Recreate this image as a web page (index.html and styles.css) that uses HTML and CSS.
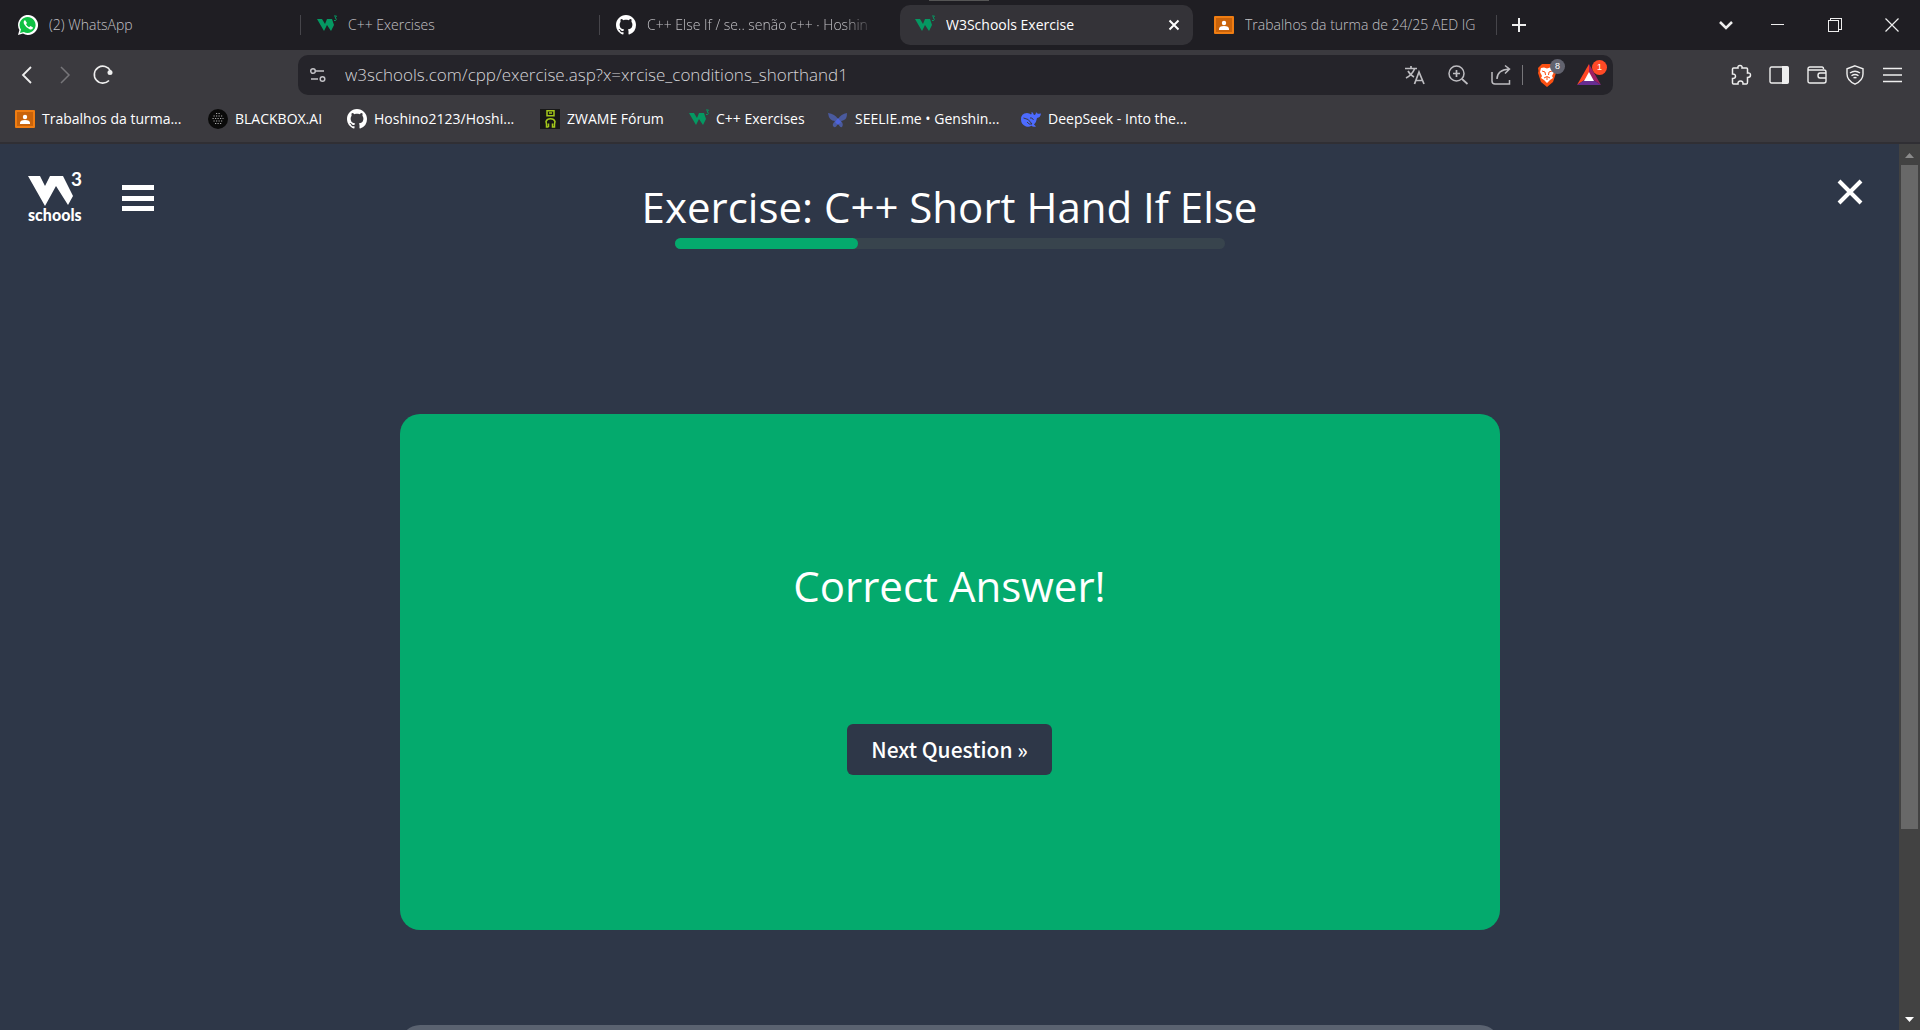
FILE: index.html
```html
<!DOCTYPE html>
<html lang="en">
<head>
<meta charset="utf-8">
<title>W3Schools Exercise</title>
<link rel="stylesheet" href="styles.css">
</head>
<body>
<svg class="sprite" aria-hidden="true">
  <symbol id="w3" viewBox="0 0 20 20">
    <path d="M0 4h5l3 5 2-5h5l2 6-3 6-4-6-3 6z" fill="#059862"/>
    <path d="M17 1h2.500L18 3q1.500 0 1.300 1.500T17 5.500" fill="none" stroke="#059862"/>
  </symbol>
  <symbol id="classroom" viewBox="0 0 20 20">
    <rect y="1" width="20" height="18" rx="1" fill="#ef7d12"/>
    <rect x="2" y="3" width="16" height="14" fill="#c9630a"/>
    <circle cx="10" cy="8" r="2.200" fill="#fff"/>
    <path d="M5 15v-1q0-3 5-3t5 3v1z" fill="#fff"/>
  </symbol>
  <symbol id="github" viewBox="0 0 16 16">
    <path fill="#fff" d="M8 0C3.580 0 0 3.580 0 8c0 3.540 2.290 6.530 5.470 7.590.4.070.55-.17.55-.38 0-.19-.01-.82-.01-1.490-2.010.37-2.530-.49-2.690-.94-.09-.23-.48-.94-.82-1.130-.28-.15-.68-.52-.01-.53.63-.01 1.080.58 1.230.82.72 1.210 1.870.87 2.330.66.07-.52.28-.87.51-1.070-1.780-.2-3.640-.89-3.640-3.950 0-.87.31-1.590.82-2.150-.08-.2-.36-1.020.08-2.120 0 0 .67-.21 2.200.82.64-.18 1.320-.27 2-.27s1.360.09 2 .27c1.530-1.040 2.200-.82 2.200-.82.44 1.100.16 1.920.08 2.120.51.56.82 1.270.82 2.150 0 3.070-1.870 3.750-3.650 3.950.29.25.54.73.54 1.480 0 1.070-.01 1.930-.01 2.200 0 .21.15.46.55.38A8.010 8.010 0 0 0 16 8c0-4.420-3.580-8-8-8z"/>
  </symbol>
</svg>

<header class="browser">
  <div class="tabstrip">
    <nav class="tabs" aria-label="Tabs">
      <a class="tab" href="#"><svg class="fav" viewBox="0 0 20 20"><path d="M0 20l1.400-5A10 10 0 1 1 5 18.600z" fill="#fff"/><path d="M2 18l1-3.500A8 8 0 1 1 5.800 17z" fill="#0fc144"/><path d="M7 5q-2 1-1 4 2 4 6 5.500 3 .5 3-2l-2.500-1.500-1.500 1.300q-2-1-3-3L9 8z" fill="#fff"/></svg><span class="tab-text">(2) WhatsApp</span></a>
      <a class="tab" href="#"><svg class="fav"><use href="#w3"/></svg><span class="tab-text">C++ Exercises</span></a>
      <a class="tab" href="#"><svg class="fav"><use href="#github"/></svg><span class="tab-text faded">C++ Else If / se.. senão c++ · Hoshin</span></a>
      <a class="tab active" href="#"><svg class="fav"><use href="#w3"/></svg><span class="tab-text">W3Schools Exercise</span><svg class="tab-close" viewBox="0 0 12 12"><path d="M1.500 1.500l9 9m0-9l-9 9"/></svg></a>
      <a class="tab" href="#"><svg class="fav"><use href="#classroom"/></svg><span class="tab-text">Trabalhos da turma de 24/25 AED IG</span></a>
    </nav>
    <button class="icon-btn new-tab" aria-label="New tab"><svg width="14" height="14" viewBox="0 0 14 14"><path d="M7 0v14M0 7h14" stroke-width="2"/></svg></button>
    <div class="window-controls">
      <button class="icon-btn tab-search" aria-label="Search tabs"><svg width="14" height="8" viewBox="0 0 14 8"><path d="M1 1l6 6 6-6" stroke-width="2.500"/></svg></button>
      <button class="icon-btn" aria-label="Minimize"><svg width="14" height="14" viewBox="0 0 14 14" shape-rendering="crispEdges"><path d="M0 6.500h13"/></svg></button>
      <button class="icon-btn" aria-label="Restore"><svg width="14" height="14" viewBox="0 0 14 14" shape-rendering="crispEdges"><path d="M.5 2.500h10v11H.5zM2.500 2V.5h11v11H11"/></svg></button>
      <button class="icon-btn" aria-label="Close"><svg width="14" height="14" viewBox="0 0 14 14"><path d="M.5.5l13 13m0-13l-13 13" stroke-width="1.200"/></svg></button>
    </div>
  </div>

  <div class="toolbar">
    <div class="nav-buttons">
      <button class="icon-btn" aria-label="Back"><svg width="10" height="18" viewBox="0 0 10 18"><path d="M9 1L1 9l8 8" stroke-width="1.800"/></svg></button>
      <button class="icon-btn dim" aria-label="Forward"><svg width="10" height="18" viewBox="0 0 10 18"><path d="M1 1l8 8-8 8" stroke-width="1.500"/></svg></button>
      <button class="icon-btn" aria-label="Reload"><svg width="20" height="20" viewBox="0 0 20 20"><path d="M17.500 6A8.500 8.500 0 1 0 16 15.500" stroke-width="1.600"/><circle cx="17" cy="7.500" r="2.500" fill="#eee" stroke="none"/></svg></button>
    </div>
    <div class="omnibox">
      <svg class="site-info" width="16" height="16" viewBox="0 0 16 16"><circle cx="3" cy="4" r="2.300"/><path d="M6 4h8M1 12h7"/><circle cx="12.500" cy="12" r="2.300"/></svg>
      <input class="url" type="text" aria-label="Address" value="w3schools.com/cpp/exercise.asp?x=xrcise_conditions_shorthand1">
      <button class="icon-btn soft" aria-label="Translate"><svg width="20" height="20" viewBox="0 0 20 20"><path d="M0 3.500h12M6 1v2M9.500 4Q7 10 1 13M3 6q2 4 6 6M9.500 19l4.500-12 5 12M11 15.500h6.500" stroke-width="1.700"/></svg></button>
      <button class="icon-btn soft" aria-label="Zoom"><svg width="20" height="20" viewBox="0 0 20 20"><circle cx="8.500" cy="8.500" r="7.500" stroke-width="1.500"/><path d="M14 14l5.500 5M8.500 5v7M5 8.500h7" stroke-width="1.700"/></svg></button>
      <button class="icon-btn soft" aria-label="Share"><svg width="20" height="20" viewBox="0 0 20 20"><path d="M1 7v9q0 3 3 3h14.500v-4M6 14q0-9 12-10M14 .5L18.500 4 14 8.500" stroke-width="1.500"/></svg></button>
      <span class="divider"></span>
      <button class="icon-btn badged" aria-label="Brave Shields"><svg width="20" height="24" viewBox="0 0 20 24"><path d="M5 1h10l4 4-.5 3 .5 2-3 9-6 5-6-5-3-9 .5-2L1 5z" fill="#fb5012" stroke="none"/><path d="M4 5l3-.5 3 1 3-1L16 5l1 4-2 4 1 2-3 2-3 3-3-3-3-2 1-2-2-4z" fill="#fff" stroke="none"/><path d="M5 8l3 1 .5 3M15 8l-3 1-.5 3M7 15l3-1.500 3 1.500M10 14v3" stroke="#fb5012"/></svg><span class="badge">8</span></button>
      <button class="icon-btn badged" aria-label="Rewards"><svg width="24" height="22" viewBox="0 0 24 22"><path d="M12 0L0 21 9 15 12 9z" fill="#ff4724" stroke="none"/><path d="M12 0l12 21-9-6-3-6z" fill="#9e1f63" stroke="none"/><path d="M0 21h24l-9-6H9z" fill="#662d91" stroke="none"/><path d="M12 8l5 9H7z" fill="#fff" stroke="none"/></svg><span class="badge alert">1</span></button>
    </div>
    <div class="extensions">
      <button class="icon-btn" aria-label="Extensions"><svg width="20" height="20" viewBox="0 0 20 20"><path d="M1.500 4q0-1 1-1H7q-.5-2.500 2-2.500T11 3h4.500q1 0 1 1v4q3-.5 3 2t-3 2.500v4.500q0 2-1 2H12q.3-3-2.500-3T7 19H2.500q-1 0-1-1v-4.500q3 0 3-2.300T1.500 9z" stroke-width="1.500"/></svg></button>
      <button class="icon-btn" aria-label="Sidebar"><svg width="20" height="18" viewBox="0 0 20 18"><rect x="1" y="1" width="18" height="16" rx="1.500" stroke-width="1.400"/><path d="M13 0h5q2 0 2 2v14q0 2-2 2h-5z" fill="#eee" stroke="none"/></svg></button>
      <button class="icon-btn" aria-label="Wallet"><svg width="20" height="18" viewBox="0 0 20 18"><path d="M1 3q0-2 2-2h12q1.500 0 1.500 2M1 3q0 1 1.500 1H17q2 0 2 2v9q0 2-2 2H3q-2 0-2-2zM19 7h-6q-2 0-2 2.500t2 2.500h6z" stroke-width="1.400"/></svg></button>
      <button class="icon-btn" aria-label="VPN"><svg width="18" height="20" viewBox="0 0 18 20"><path d="M9 .8l8 3V9q0 6.500-8 10.200Q1 15.500 1 9V3.800z" stroke-width="1.400"/><path d="M4 8q5-3.500 10 0M5.500 10.700q3.500-2.500 7 0M7.500 13q1.500-1 3 0" stroke-width="1.400"/></svg></button>
      <button class="icon-btn" aria-label="Menu"><svg width="20" height="16" viewBox="0 0 20 16"><path d="M0 1.500h19M0 8h19M0 14.500h19" stroke-width="1.700"/></svg></button>
    </div>
  </div>

  <nav class="bookmarks" aria-label="Bookmarks">
    <a class="bookmark" href="#"><svg class="fav"><use href="#classroom"/></svg><span class="label-wide">Trabalhos da turma...</span></a>
    <a class="bookmark" href="#"><svg class="fav" viewBox="0 0 20 20"><circle cx="10" cy="10" r="10" fill="#0a0a0a"/><path d="M8 4.500h5M5.500 7h9M4.500 9.500h11M5.500 12h10M7 14.500h7" stroke="#aaa" stroke-width="1.200" stroke-dasharray="1.200 1.300"/></svg><span class="label-narrow">BLACKBOX.AI</span></a>
    <a class="bookmark" href="#"><svg class="fav"><use href="#github"/></svg><span class="label-wide">Hoshino2123/Hoshi...</span></a>
    <a class="bookmark" href="#"><svg class="fav" viewBox="0 0 20 20"><path d="M0 0h20v20H0z" fill="#171717"/><path d="M7 1.700h7v5H7zM9 4h3M8.500 18H6.500v-3L6 12.500Q7 9.700 10.500 9.700T15 12.500l-.5 2.500v3h-2v-3.500M8.500 18v-3.500" fill="none" stroke="#a4c81b" stroke-width="1.500"/></svg><span class="label-middle">ZWAME Fórum</span></a>
    <a class="bookmark" href="#"><svg class="fav"><use href="#w3"/></svg><span class="label-narrow">C++ Exercises</span></a>
    <a class="bookmark" href="#"><svg class="fav" viewBox="0 0 20 20"><path d="M0 4q7 1 10 6 3-5 9-6 0 6-3 7-2 1-3 1 3 3 1 6-3 1-4-5-1 6-4 5-3-2 1-6-6 0-7-8z" fill="#4a5a9e"/><path d="M10 9l3 4-3 3-3-3z" fill="#4d63dc"/></svg><span class="label-wide">SEELIE.me • Genshin...</span></a>
    <a class="bookmark" href="#"><svg class="fav" viewBox="0 0 20 20"><path d="M0 10.500Q0 4 6 4q2.500 0 4 1.500 1-.5.500-2.500Q12 3 13 6q2 0 2-3 1 2 2.500 1.800L20 4.500q-.5 4-4 4.500-.5 4-3 6.500l2 2q-3 1-4.500-.7Q8 18.500 5 17.500 0 15.500 0 10.500z" fill="#4d6bfe"/><path d="M2.500 9q5 0 8.500 6-3 1-5-2M9 9q2-1 3.500 2" fill="none" stroke="#3b3a3f"/></svg><span class="label-wide">DeepSeek - Into the...</span></a>
  </nav>
</header>

<div class="viewport">
  <main class="page">
    <header class="page-header">
      <div class="brand">
        <a class="logo" href="#" aria-label="W3Schools home">
          <svg width="56" height="56" viewBox="0 0 56 56"><path d="M0 8h12l5 10 5-10h13l10 20-5 9-12-19-11 20z" fill="#fff"/><text class="logo-three" x="43" y="18">3</text><text class="logo-word" x="0" y="53">schools</text></svg>
        </a>
        <button class="icon-btn" aria-label="Open menu"><svg width="32" height="26" viewBox="0 0 32 26" shape-rendering="crispEdges"><path d="M0 2.500h32M0 13h32M0 23.500h32" stroke="#fff" stroke-width="5"/></svg></button>
      </div>
      <div class="exercise">
        <h1 class="headline">Exercise: C++ Short Hand If Else</h1>
        <div class="progress" role="progressbar" aria-valuenow="33" aria-valuemin="0" aria-valuemax="100"><div class="progress-fill" style="width: 33.300%"></div></div>
      </div>
      <button class="icon-btn close-exercise" aria-label="Close exercise"><svg width="26" height="26" viewBox="0 0 26 26"><path d="M2 2l22 22m0-22L2 24" stroke="#fff" stroke-width="4"/></svg></button>
    </header>
    <section class="card result">
      <h2 class="headline">Correct Answer!</h2>
      <button class="next">Next Question »</button>
    </section>
    <section class="card following"></section>
  </main>
  <div class="scrollbar" aria-hidden="true">
    <svg class="arrow" viewBox="0 0 21 21"><path d="M6 14h9l-4.500-5z" fill="#8b8b8b"/></svg>
    <div class="track"><div class="thumb" style="height: 78.700%"></div></div>
    <svg class="arrow" viewBox="0 0 21 21"><path d="M6 8h9l-4.500 5z" fill="#fff"/></svg>
  </div>
</div>
</body>
</html>
```

FILE: styles.css
```css
* { box-sizing: border-box; }

body {
  margin: 0;
  height: 100vh;
  display: flex;
  flex-direction: column;
  overflow: hidden;
  background: #2e3748;
  color: #fff;
  font-family: "Open Sans", "Noto Sans", sans-serif;
}

.sprite { display: none; }

a { color: inherit; text-decoration: none; }

.icon-btn {
  display: flex;
  align-items: center;
  justify-content: center;
  flex: none;
  margin: 0;
  padding: 0;
  border: 0;
  background: none;
}

.icon-btn svg { fill: none; stroke: #eee; overflow: visible; }
.icon-btn.dim svg { stroke: #77767a; }
.icon-btn.soft svg { stroke: #bdbcc0; }

.fav { width: 20px; height: 20px; flex: none; }

/* Browser chrome */
.browser {
  flex: none;
  background: #3b3a3f;
  border-bottom: 2px solid #302f34;
  font-size: 14px;
  line-height: 20px;
}

.tabstrip {
  display: flex;
  align-items: center;
  height: 50px;
  padding-left: 3px;
  background: #1f1e23;
}

.tabs {
  flex: 0 1 1493px;
  min-width: 0;
  display: flex;
  gap: 6px;
  padding-right: 4px;
}

.tab {
  position: relative;
  flex: 1 1 0;
  min-width: 0;
  height: 40px;
  display: flex;
  align-items: center;
  gap: 11px;
  padding: 0 13px 0 15px;
  border-radius: 10px;
  color: #c3c2c6;
  font-weight: 300;
}

.tab-text {
  flex: 1;
  min-width: 0;
  overflow: hidden;
  white-space: nowrap;
}

.faded {
  -webkit-mask-image: linear-gradient(90deg, #000 84%, transparent 98%);
  mask-image: linear-gradient(90deg, #000 84%, transparent 98%);
}

.tab::after {
  content: "";
  position: absolute;
  right: -5px;
  top: 10px;
  width: 1px;
  height: 20px;
  background: #46454a;
}

.tab.active { background: #343338; color: #fff; font-weight: 400; }
.tab.active::after, .tab:has(+ .active)::after { display: none; }

.tab.active::before {
  content: "";
  position: absolute;
  left: 29px;
  top: -5px;
  width: 60px;
  height: 1px;
  background: #555;
}

.tab-close { width: 12px; height: 12px; fill: none; stroke: #fff; stroke-width: 2; }

.new-tab { margin-left: 16px; }

.window-controls { display: flex; margin-left: auto; height: 50px; }
.window-controls .icon-btn { width: 57px; }
.window-controls .tab-search { width: 46px; }

.toolbar {
  display: flex;
  align-items: center;
  height: 50px;
  gap: 18px;
}

.nav-buttons { display: flex; flex: 0 1 280px; min-width: 120px; padding-left: 8px; }
.nav-buttons .icon-btn { width: 38px; }

.omnibox {
  flex: 1;
  min-width: 0;
  height: 40px;
  display: flex;
  align-items: center;
  padding: 0 14px 0 12px;
  border-radius: 10px;
  background: #25242a;
}

.site-info { flex: none; fill: none; stroke: #c3c2c6; stroke-width: 1.500; }

.url {
  flex: 1;
  min-width: 0;
  margin: 0;
  padding: 0 0 0 19px;
  border: 0;
  outline: 0;
  background: none;
  color: #d5d4d8;
  font: 300 17px/24px "Open Sans", sans-serif;
}

.omnibox .icon-btn { width: 43px; }
.divider { width: 1px; height: 20px; background: #77767a; }
.omnibox .badged { position: relative; width: 42px; padding-left: 6px; }
.omnibox .badged + .badged { margin-right: -8px; }

.badge {
  position: absolute;
  right: 0;
  top: -4px;
  width: 15px;
  height: 15px;
  border-radius: 8px;
  background: #62636f;
  color: #fff;
  font-size: 9px;
  line-height: 15px;
  text-align: center;
}

.alert { background: #ff4a26; }

.extensions { display: flex; flex: none; justify-content: flex-end; width: 289px; padding-right: 8px; }
.extensions .icon-btn { width: 38px; }

.bookmarks {
  display: flex;
  align-items: center;
  gap: 20px;
  height: 42px;
  padding: 0 15px 4px;
}

.bookmark { display: flex; align-items: center; gap: 7px; white-space: nowrap; }
.label-wide { width: 146px; }
.label-middle { width: 102px; }
.label-narrow { width: 92px; }

/* Web page */
.viewport { flex: 1; min-height: 0; display: flex; }

.page {
  flex: 1;
  min-width: 0;
  overflow: hidden;
  display: flex;
  flex-direction: column;
  align-items: center;
}

.page-header {
  align-self: stretch;
  flex: none;
  display: grid;
  grid-template-columns: 1fr auto 1fr;
  align-items: start;
  padding: 24px 28px 0;
}

.brand { display: flex; align-items: center; gap: 38px; }
.brand .icon-btn { padding-top: 4px; }
.logo { display: flex; }
.logo svg { overflow: visible; }
.logo-three { fill: #fff; font: 700 19px Lato, sans-serif; }
.logo-word { fill: #fff; font: 900 16px Lato, sans-serif; }

.exercise { display: flex; flex-direction: column; align-items: center; gap: 1px; padding-top: 9px; }

.headline { margin: 0; font-size: 42px; line-height: 60px; font-weight: 400; text-align: center; }

.progress { width: 550px; height: 11px; border-radius: 6px; background: #38444d; }
.progress-fill { height: 100%; border-radius: 6px; background: #04aa6d; }

.close-exercise { justify-self: end; margin: 11px 8px 0 0; }

.card { flex: none; width: 1100px; max-width: 90%; border-radius: 20px; }

.result {
  display: flex;
  flex-direction: column;
  align-items: center;
  gap: 108px;
  margin-top: 165px;
  padding: 142px 20px 155px;
  background: #04aa6d;
}

.next {
  height: 51px;
  padding: 0 24px 1px;
  border: 0;
  border-radius: 6px;
  background: #2e3748;
  color: #fff;
  font: 500 21px/32px "Noto Sans CJK SC", sans-serif;
}

.following { height: 400px; margin-top: 95px; background: #5a6270; }

.scrollbar {
  flex: none;
  width: 21px;
  display: flex;
  flex-direction: column;
  background: #424242;
}

.arrow { width: 21px; height: 21px; flex: none; }
.track { flex: 1; padding: 0 2px; }
.thumb { background: #686868; }
```
